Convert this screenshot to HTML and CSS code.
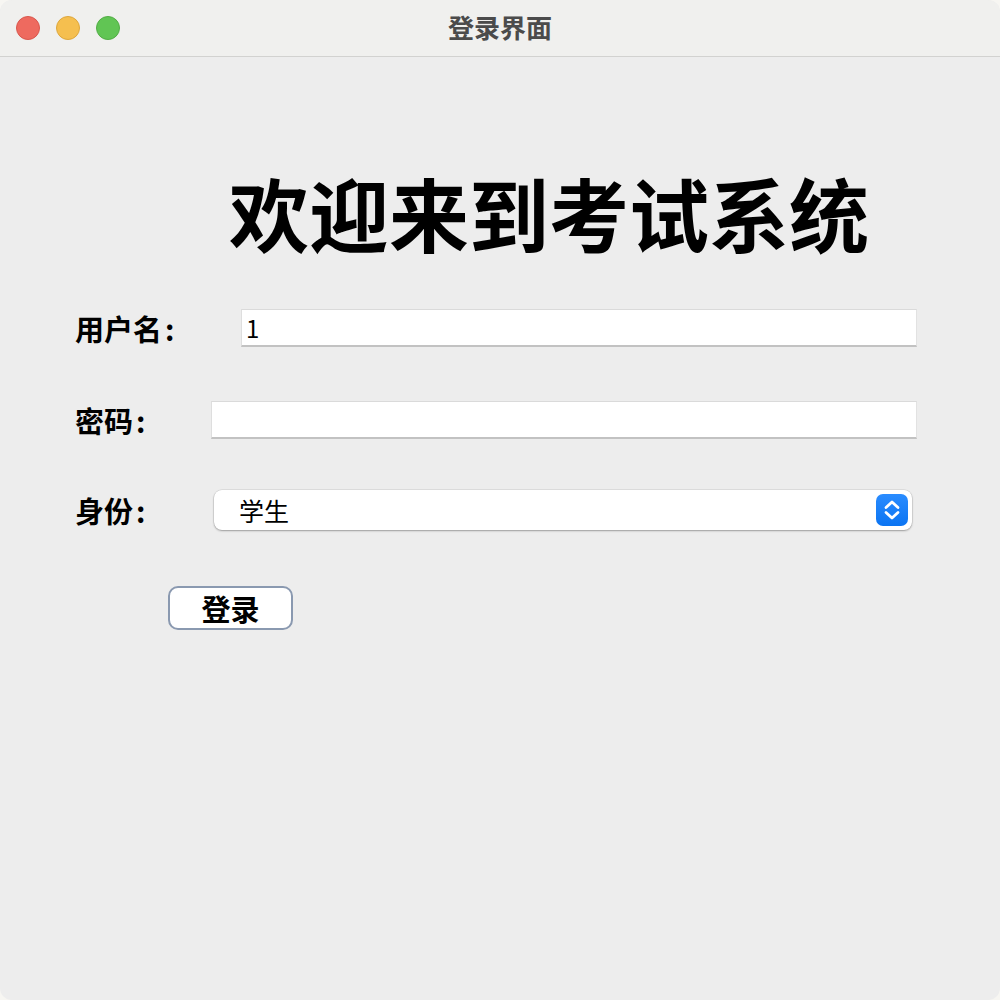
FILE: index.html
```html
<!DOCTYPE html>
<html lang="zh-CN">
<head>
<meta charset="utf-8">
<title>登录界面</title>
<link rel="stylesheet" href="styles.css">
</head>
<body>
<div class="window">
  <div class="titlebar">
    <div class="lights">
      <span class="light red"></span>
      <span class="light yellow"></span>
      <span class="light green"></span>
    </div>
    <div class="title">登录界面</div>
  </div>
  <div class="content">
    <h1 class="heading">欢迎来到考试系统</h1>
    <div class="row row-user">
      <label class="label label-user">用户名<span class="colon">:</span></label>
      <div class="field field-user">1</div>
    </div>
    <div class="row row-pass">
      <label class="label label-pass">密码<span class="colon">:</span></label>
      <div class="field field-pass"></div>
    </div>
    <div class="row row-role">
      <label class="label label-role">身份<span class="colon">:</span></label>
      <div class="select">
        <span class="select-text">学生</span>
        <span class="stepper">
          <svg width="32" height="32" viewBox="0 0 32 32">
            <path d="M10 13.5 L16 8 L22 13.5" fill="none" stroke="#fff" stroke-width="2.8" stroke-linecap="round" stroke-linejoin="round"/>
            <path d="M10 18.5 L16 24 L22 18.5" fill="none" stroke="#fff" stroke-width="2.8" stroke-linecap="round" stroke-linejoin="round"/>
          </svg>
        </span>
      </div>
    </div>
    <div class="row row-btn">
      <button class="btn">登录</button>
    </div>
  </div>
</div>
</body>
</html>
```
FILE: styles.css
```css
html, body {
  margin: 0;
  padding: 0;
  background: #f7f6f2;
}
body {
  font-family: "Noto Sans CJK SC", "Noto Sans", sans-serif;
  width: 1000px;
  height: 1000px;
  overflow: hidden;
}
.window {
  width: 1000px;
  height: 1000px;
  background: #ededed;
  border-radius: 12px;
  overflow: hidden;
  display: flex;
  flex-direction: column;
  box-sizing: border-box;
}
.titlebar {
  height: 56px;
  flex: none;
  background: #f0f0ee;
  border-bottom: 1px solid #d2d2d0;
  position: relative;
  display: flex;
  align-items: center;
  justify-content: center;
}
.lights {
  position: absolute;
  left: 16px;
  top: 16px;
  display: flex;
  gap: 16px;
}
.light {
  width: 24px;
  height: 24px;
  border-radius: 50%;
  box-sizing: border-box;
}
.red { background: #ee6a5f; border: 1px solid #d9574d; }
.yellow { background: #f5bf4f; border: 1px solid #dea73c; }
.green { background: #61c554; border: 1px solid #52ad45; }
.title {
  font-size: 26px;
  font-weight: bold;
  color: #4b4b4b;
  line-height: 56px;
  margin-top: -2px;
}
.content {
  display: flex;
  flex-direction: column;
}
.heading {
  margin: 114px 0 0 229px;
  font-size: 80px;
  line-height: 80px;
  font-weight: bold;
  color: #000;
  white-space: nowrap;
}
.row {
  display: flex;
  align-items: center;
  padding-left: 75px;
}
.label {
  flex: none;
  font-size: 29px;
  line-height: 38px;
  height: 38px;
  font-weight: bold;
  color: #000;
  white-space: nowrap;
}
.colon {
  margin-left: 3px;
}
.label-user { width: 166px; }
.label-pass { width: 136px; }
.label-role { width: 139px; }
.row-user { margin-top: 58px; }
.row-pass { margin-top: 54px; }
.row-role { margin-top: 51px; }
.row-btn { margin-top: 56px; }
.field {
  height: 38px;
  box-sizing: border-box;
  background: #fff;
  border-top: 1px solid #dadada;
  border-left: 1px solid #dedede;
  border-right: 1px solid #e2e2e2;
  border-bottom: 2px solid #c2c2c2;
  font-size: 24px;
  line-height: 36px;
  padding-left: 4px;
  color: #000;
}
.field-user { width: 676px; }
.field-pass { width: 706px; }
.select {
  width: 698px;
  height: 40px;
  box-sizing: border-box;
  background: #fff;
  border-radius: 8px;
  box-shadow: 0 0 0 0.5px rgba(0,0,0,0.12), 0 1px 2px rgba(0,0,0,0.3);
  display: flex;
  align-items: center;
  justify-content: space-between;
  padding: 0 4px 0 25px;
}
.select-text {
  font-size: 25px;
  color: #000;
}
.stepper {
  width: 32px;
  height: 32px;
  border-radius: 7px;
  background: linear-gradient(#2a8cff, #0b74f2);
  display: flex;
}
.btn {
  margin-left: 93px;
  width: 125px;
  height: 44px;
  box-sizing: border-box;
  background: #fff;
  border: 2px solid #8a99b0;
  border-radius: 10px;
  font-family: "Noto Sans CJK SC", sans-serif;
  font-size: 29px;
  font-weight: bold;
  color: #000;
  padding: 0;
  line-height: 38px;
}
```
